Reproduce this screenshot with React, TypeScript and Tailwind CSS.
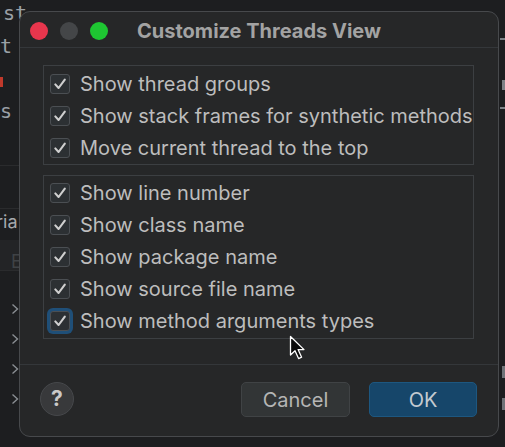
import React from 'react';

type Option = {
  label: string;
  focused?: boolean;
};

const threadOptions: Option[] = [
  { label: 'Show thread groups' },
  { label: 'Show stack frames for synthetic methods' },
  { label: 'Move current thread to the top' },
];

const frameOptions: Option[] = [
  { label: 'Show line number' },
  { label: 'Show class name' },
  { label: 'Show package name' },
  { label: 'Show source file name' },
  { label: 'Show method arguments types', focused: true },
];

const CheckMark = () => (
  <svg width="14" height="14" viewBox="0 0 14 14" fill="none">
    <path d="M2.3 7.4 L5.6 11 L11.8 2.6" stroke="#cfcfcf" strokeWidth="2.1" strokeLinecap="round" strokeLinejoin="round" />
  </svg>
);

const CheckRow: React.FC<{ option: Option }> = ({ option }) => (
  <div className="flex h-[32px] items-center">
    <div
      className={
        option.focused
          ? 'flex h-[26px] w-[26px] items-center justify-center rounded-[6px] bg-[#1f4f78] -ml-[3px] mr-[7px]'
          : 'flex h-[20px] w-[20px] items-center justify-center mr-[10px]'
      }
    >
      <div className="flex h-[20px] w-[20px] items-center justify-center rounded-[3px] border border-[#4b4f53] bg-[#2c3033]">
        <CheckMark />
      </div>
    </div>
    <span className="whitespace-nowrap text-[20px] leading-none text-[#bdbdbd]">{option.label}</span>
  </div>
);

const Group: React.FC<{ options: Option[]; className: string }> = ({ options, className }) => (
  <div className={`ml-[23px] w-[431px] border border-[#3c3f42] pl-[6px] ${className}`}>
    {options.map(o => (
      <CheckRow key={o.label} option={o} />
    ))}
  </div>
);

const Chevron = () => (
  <svg width="8" height="12" viewBox="0 0 8 12" className="ml-[11px]">
    <path d="M1.5 1.5 L6.5 6 L1.5 10.5" stroke="#8a8e93" strokeWidth="1.4" fill="none" />
  </svg>
);

// editor gutter peeking out on the left of the dialog
const LeftGutter = () => (
  <div className="absolute left-0 top-0 flex h-full w-[19px] flex-col font-['DejaVu_Sans_Mono',monospace] text-[20px] leading-none text-[#9aa0a6]">
    <div className="h-[34px] pl-[3px] pt-[3px] whitespace-nowrap">st</div>
    <div className="h-[43px] -ml-[12px] pt-[2px] whitespace-nowrap">nt</div>
    <div className="h-[10px] w-[4px] -ml-px bg-[#c0392b]" />
    <div className="h-[78px] -ml-[12px] pt-[14px] whitespace-nowrap">ls</div>
    <div className="h-[43px] border-t border-[#2a2b2d]" />
    <div className="h-[32px] border-t border-[#2a2b2d] -ml-[4px] pt-[4px] font-['Inter',sans-serif] text-[18px] text-[#a6a9ad] whitespace-nowrap">
      ria
    </div>
    <div className="h-[30px] bg-[#232426] pl-[11px] pt-[13px] font-['Inter',sans-serif] text-[18px] text-[#3f4245] overflow-hidden">
      E
    </div>
    <div className="flex flex-col gap-[18px] border-t border-[#2a2b2d] pt-[32px]">
      <Chevron />
      <Chevron />
      <Chevron />
      <Chevron />
    </div>
  </div>
);

const RightGutter = () => (
  <div className="absolute right-0 top-0 flex h-full w-[6px] flex-col items-end">
    <div className="mt-[38px] h-[2px] w-[5px] bg-[#7d8186]" />
    <div className="mt-[40px] h-[10px] w-[3px] bg-[#7d8186]" />
    <div className="mt-[17px] h-[2px] w-[5px] bg-[#7d8186]" />
    <div className="mt-[257px] h-[12px] w-[3px] bg-[#6f7378]" />
    <div className="mt-[20px] h-[12px] w-[3px] bg-[#6f7378]" />
  </div>
);

// pointer arrow sitting over the dialog
const Cursor = () => (
  <svg className="absolute left-[289px] top-[335px]" width="18" height="26" viewBox="0 0 18 26">
    <path d="M1.5 1.5 L1.5 20 L6 15.8 L9.6 23.6 L12.6 22.2 L9.1 14.6 L15 14.6 Z" fill="#0a0a0a" stroke="#ffffff" strokeWidth="1.3" strokeLinejoin="round" />
  </svg>
);

const App: React.FC = () => {
  return (
    <div
      className="relative h-[447px] w-[505px] overflow-hidden bg-[#1d1e20] pl-[19px] pt-[11px]"
      style={{ fontFamily: 'Inter, "Noto Sans", sans-serif' }}
    >
      <LeftGutter />
      <RightGutter />

      {/* dialog window */}
      <div className="relative flex h-[426px] w-[480px] flex-col rounded-[11px] border border-[#47494c] bg-[#262728]">
        <div className="relative flex h-[36px] shrink-0 items-center justify-center border-b border-[#34373a] pt-[3px]">
          <div className="absolute left-[10px] top-[10px] flex gap-[12px]">
            <span className="h-[18px] w-[18px] rounded-full bg-[#e8364d]" />
            <span className="h-[18px] w-[18px] rounded-full bg-[#444648]" />
            <span className="h-[18px] w-[18px] rounded-full bg-[#1ec632]" />
          </div>
          <span className="text-[20px] font-bold leading-none text-[#a3a3a3]">Customize Threads View</span>
        </div>

        <Group options={threadOptions} className="mt-[17px] pt-[2px]" />
        <Group options={frameOptions} className="mt-[10px] pt-[1px] pb-[1px]" />

        <div className="mt-[25px] flex flex-1 items-start border-t border-[#34373a] pl-[20px] pr-[21px] pt-[17px]">
          <div className="flex h-[34px] w-[34px] items-center justify-center rounded-full border border-[#46484b] bg-[#38393b] text-[21px] font-bold text-[#c9c9c9]">
            ?
          </div>
          <div className="ml-auto flex gap-[19px]">
            <button className="flex h-[35px] w-[109px] items-center justify-center rounded-[5px] border border-[#404345] bg-[#323536] text-[20px] text-[#b5b5b5]">
              Cancel
            </button>
            <button className="flex h-[35px] w-[108px] items-center justify-center rounded-[5px] border border-[#1d5780] bg-[#16466a] text-[20px] text-[#c3cad0]">
              OK
            </button>
          </div>
        </div>
      </div>

      <Cursor />
    </div>
  );
};

export default App;
